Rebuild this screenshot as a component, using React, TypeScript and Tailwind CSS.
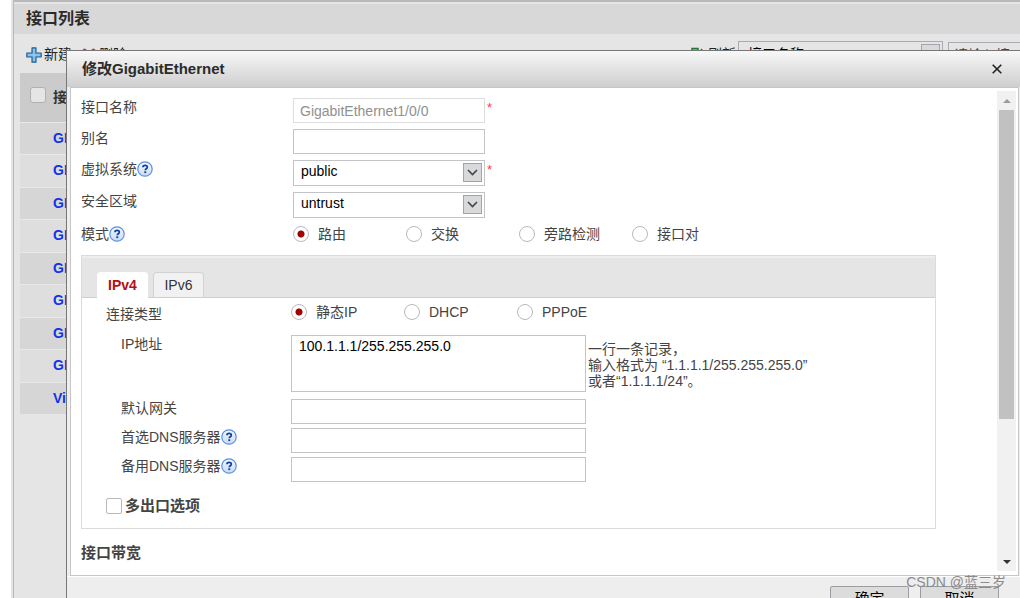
import { useState } from 'react';
import type { ReactNode } from 'react';

const interfaces = [
  'GE1/0/0',
  'GE1/0/1',
  'GE1/0/2',
  'GE1/0/3',
  'GE1/0/4',
  'GE1/0/5',
  'GE1/0/6',
  'GE1/0/7',
  'Virtual-if0',
];

const fieldClass =
  'block h-[25px] border border-[#c3c4c8] bg-white px-[6px] text-[14px] text-[#222] outline-none';

function HelpIcon() {
  return (
    <svg viewBox="0 0 16 16" className="h-4 w-4 shrink-0" aria-label="帮助">
      <defs>
        <linearGradient id="help-fill" x1="0" y1="0" x2="0" y2="1">
          <stop offset="0" stopColor="#f4f8fe" />
          <stop offset="1" stopColor="#c9dbf3" />
        </linearGradient>
      </defs>
      <circle cx="8" cy="8" r="7.2" fill="url(#help-fill)" stroke="#5b8fdc" strokeWidth="1.2" />
      <path
        d="M5.9 6.3c0-1.4 1-2 2.2-2s2.2.7 2.2 1.9c0 1.5-2 1.6-2 3"
        fill="none"
        stroke="#0c43a3"
        strokeWidth="1.7"
      />
      <rect x="7.3" y="10.3" width="1.9" height="1.8" fill="#0c43a3" />
    </svg>
  );
}

function PlusIcon() {
  return (
    <svg viewBox="0 0 16 16" className="h-4 w-4 shrink-0">
      <path
        d="M6 .8h4V6h5.2v4H10v5.2H6V10H.8V6H6z"
        fill="#6fb0dd"
        stroke="#27629c"
        strokeWidth="1.2"
        strokeLinejoin="round"
      />
      <path d="M8 2v12M2 8h12" stroke="#a5d3f0" strokeWidth="1" />
    </svg>
  );
}

function DeleteIcon() {
  return (
    <svg viewBox="0 0 16 16" className="h-4 w-4 shrink-0">
      <path
        d="M3.5 3.5l9 9M12.5 3.5l-9 9"
        stroke="#cf3b3b"
        strokeWidth="4"
        strokeLinecap="round"
      />
    </svg>
  );
}

function RefreshIcon() {
  return (
    <svg viewBox="0 0 16 16" className="h-4 w-4 shrink-0">
      <path d="M2 1.5h6v5H2z" fill="#7fc98a" stroke="#1f7a34" strokeWidth="1.5" />
      <path d="M11 2l3 4-3 3M5 9v5h6" fill="none" stroke="#1f7a34" strokeWidth="1.5" />
    </svg>
  );
}

function Chevron() {
  return (
    <span className="pointer-events-none absolute top-[3px] right-[3px] flex h-[19px] w-[19px] items-center justify-center border border-[#a3a5aa] bg-[#d8d9db]">
      <svg viewBox="0 0 11 7" className="h-[7px] w-[11px]">
        <path d="M1 1l4.5 4.5L10 1" fill="none" stroke="#444" strokeWidth="1.6" />
      </svg>
    </span>
  );
}

function SelectBox({ id, value }: { id: string; value: string }) {
  return (
    <div className="relative w-[192px]">
      <select
        id={id}
        className="block h-[26px] w-full appearance-none border border-[#c3c4c8] bg-white px-[7px] pb-1 text-[14px] text-black outline-none"
      >
        <option>{value}</option>
      </select>
      <Chevron />
    </div>
  );
}

function RadioGroup({
  name,
  options,
  labelledBy,
}: {
  name: string;
  options: string[];
  labelledBy: string;
}) {
  const [value, setValue] = useState(options[0]);
  return (
    <div role="radiogroup" aria-labelledby={labelledBy} className="flex">
      {options.map((option) => (
        <label key={option} className="flex w-[113px] items-center gap-[9px] leading-4">
          <input
            type="radio"
            name={name}
            checked={value === option}
            onChange={() => setValue(option)}
            className="h-4 w-4 shrink-0 appearance-none rounded-full border border-[#b9b9bb] bg-white checked:bg-[radial-gradient(circle,#a00000_0,#a00000_3px,#fff_4px)]"
          />
          {option}
        </label>
      ))}
    </div>
  );
}

function Star() {
  return <span className="ml-[2px] self-start text-[13px] leading-5 text-[#ff3b3b]">*</span>;
}

function FormRow({
  label,
  htmlFor,
  help,
  children,
}: {
  label: string;
  htmlFor: string;
  help?: boolean;
  children: ReactNode;
}) {
  return (
    <div className="flex items-start">
      <div className="flex h-[18px] w-[212px] shrink-0 items-center">
        <label htmlFor={htmlFor}>{label}</label>
        {help && <HelpIcon />}
      </div>
      {children}
    </div>
  );
}

function DnsRow({ id, label, help }: { id: string; label: string; help?: boolean }) {
  return (
    <div className="flex items-start pl-[15px]">
      <div className="flex h-[18px] w-[170px] shrink-0 items-center">
        <label htmlFor={id}>{label}</label>
        {help && <HelpIcon />}
      </div>
      <input id={id} className={`${fieldClass} w-[295px]`} />
    </div>
  );
}

function ListPage() {
  return (
    <main className="ml-[11px] h-full border-l-2 border-[#e4e4e4]">
      <div className="h-full border-t-2 border-l border-[#b9b9bb] bg-[#e5e5e5]">
        <h1 className="mt-[2px] flex h-[30px] items-center bg-[#d8d8d8] pl-[12px] text-[16px] font-bold text-[#2b2b2b]">
          接口列表
        </h1>
        <div className="flex h-[39px] items-center pt-[2px] pl-[12px] text-[14px] text-[#222]">
          <button type="button" className="flex items-center gap-[2px]">
            <PlusIcon />
            新建
          </button>
          <button type="button" className="ml-[9px] flex items-center gap-[2px]">
            <DeleteIcon />
            删除
          </button>
          <button type="button" className="ml-auto flex shrink-0 items-center gap-[2px]">
            <RefreshIcon />
            刷新
          </button>
          <div className="relative ml-[2px] w-[205px] shrink-0">
            <select
              aria-label="查询条件"
              className="block h-[28px] w-full appearance-none border border-[#a9aab2] bg-[#e5e5e5] px-[9px] text-black"
            >
              <option>接口名称</option>
            </select>
            <Chevron />
          </div>
          <input
            aria-label="查询内容"
            placeholder="请输入接口名称"
            className="ml-[5px] h-[26px] w-[72px] shrink-0 border border-r-0 border-[#a9aab2] bg-[#e5e5e5] px-[5px] text-black placeholder:text-[#444]"
          />
        </div>
        <table className="ml-[6px] h-[341px] w-full table-fixed border-collapse text-left text-[14px] font-bold">
          <thead>
            <tr className="h-[49px] bg-[#cbcbcb] text-[#333]">
              <th className="w-[33px] pb-[4px] pl-[10px]">
                <input
                  type="checkbox"
                  aria-label="全选"
                  className="block h-4 w-4 appearance-none rounded-[3px] border border-[#b0b0b2] bg-[#e5e5e5]"
                />
              </th>
              <th>接口名称</th>
            </tr>
          </thead>
          <tbody>
            {interfaces.map((name) => (
              <tr
                key={name}
                className="border-t border-[#e9e9e9] odd:bg-[#d6d6d6] even:bg-[#dedede]"
              >
                <td />
                <td>
                  <a href="#edit" className="text-[#1232e6]">
                    {name}
                  </a>
                </td>
              </tr>
            ))}
          </tbody>
        </table>
      </div>
    </main>
  );
}

function ScrollRail() {
  return (
    <div className="mt-[3px] mr-[2px] mb-[4px] flex w-[19px] shrink-0 flex-col bg-[#f1f1f1] px-[2px]">
      <div className="flex h-[19px] items-center justify-center">
        <svg viewBox="0 0 8 4" className="h-1 w-2">
          <path d="M0 4l4-4 4 4z" fill="#9b9b9b" />
        </svg>
      </div>
      <div className="flex-1">
        <div className="h-[70%] bg-[#c1c1c1]" />
      </div>
      <div className="flex h-[19px] items-center justify-center">
        <svg viewBox="0 0 8 4" className="h-1 w-2">
          <path d="M0 0l4 4 4-4z" fill="#333" />
        </svg>
      </div>
    </div>
  );
}

function AddressPanel() {
  return (
    <section className="mt-[11px] mr-[61px] border border-[#dcdcdc]">
      <div
        role="tablist"
        className="flex h-[42px] items-end gap-[5px] border-t-2 border-b border-t-[#eeeeee] border-b-[#cfcfcf] bg-[#e5e5e5] pl-[15px] text-[14px]"
      >
        <button
          type="button"
          role="tab"
          aria-selected="true"
          className="-mb-px h-[26px] w-[51px] rounded-t-[4px] bg-white font-bold text-[#b40f14]"
        >
          IPv4
        </button>
        <button
          type="button"
          role="tab"
          aria-selected="false"
          className="h-[25px] w-[51px] rounded-t-[4px] border border-b-0 border-[#d2d2d2] bg-[#f1f1f1] text-[#333]"
        >
          IPv6
        </button>
      </div>
      <div className="pt-[6px] pb-[14px] pl-[24px]">
        <div className="flex items-start">
          <span id="link-type" className="w-[185px] shrink-0 leading-5">
            连接类型
          </span>
          <RadioGroup name="link-type" labelledBy="link-type" options={['静态IP', 'DHCP', 'PPPoE']} />
        </div>
        <div className="mt-[11px] flex items-start pl-[15px]">
          <label htmlFor="ip" className="w-[170px] shrink-0 leading-[18px]">
            IP地址
          </label>
          <textarea
            id="ip"
            defaultValue="100.1.1.1/255.255.255.0"
            className="block h-[57px] w-[295px] resize-none border border-[#c3c4c8] px-[7px] py-[2px] text-[14px] leading-4 text-black outline-none"
          />
          <p className="mt-[6px] ml-[2px] leading-4">
            一行一条记录，
            <br />
            输入格式为 “1.1.1.1/255.255.255.0”
            <br />
            或者“1.1.1.1/24”。
          </p>
        </div>
        <div className="mt-[7px] flex flex-col gap-1">
          <DnsRow id="gateway" label="默认网关" />
          <DnsRow id="dns1" label="首选DNS服务器" help />
          <DnsRow id="dns2" label="备用DNS服务器" help />
        </div>
        <label className="mt-[16px] flex w-fit items-center gap-[3px] text-[15px] leading-4 font-bold">
          <input
            type="checkbox"
            className="h-4 w-4 appearance-none rounded-[2px] border border-[#b9b9bb] bg-white"
          />
          多出口选项
        </label>
      </div>
    </section>
  );
}

function EditDialog() {
  return (
    <div
      role="dialog"
      aria-labelledby="dialog-title"
      className="absolute top-[50px] right-0 left-[66px] border-t border-l border-[#777] bg-[#eeeeee] text-[14px] text-[#444]"
    >
      <header className="flex h-[36px] items-center justify-between bg-linear-to-b from-[#f8f8f8] to-[#cecece] pr-[17px] pl-[15px]">
        <h2 id="dialog-title" className="text-[15px] font-bold text-[#2b2b2b]">
          修改GigabitEthernet
        </h2>
        <button type="button" aria-label="关闭" className="flex h-3 w-3 items-center justify-center">
          <svg viewBox="0 0 10 10" className="h-[10px] w-[10px]">
            <path d="M.7.7l8.6 8.6M9.3.7L.7 9.3" stroke="#222" strokeWidth="1.6" />
          </svg>
        </button>
      </header>
      <div className="mr-px ml-[3px] flex border border-[#c6c6c6] bg-white">
        <form className="min-w-0 flex-1 pt-[10px] pb-[12px] pl-[10px]">
          <div className="flex flex-col gap-[6px]">
            <FormRow label="接口名称" htmlFor="name">
              <input
                id="name"
                disabled
                defaultValue="GigabitEthernet1/0/0"
                className="block h-[25px] w-[192px] border border-[#dedede] bg-white px-[6px] text-[14px] text-[#909090]"
              />
              <Star />
            </FormRow>
            <FormRow label="别名" htmlFor="alias">
              <input id="alias" className={`${fieldClass} w-[192px]`} />
            </FormRow>
            <FormRow label="虚拟系统" htmlFor="vsys" help>
              <SelectBox id="vsys" value="public" />
              <Star />
            </FormRow>
            <FormRow label="安全区域" htmlFor="zone">
              <SelectBox id="zone" value="untrust" />
            </FormRow>
            <div className="flex items-center">
              <div className="flex h-5 w-[212px] shrink-0 items-center">
                <span id="mode">模式</span>
                <HelpIcon />
              </div>
              <RadioGroup
                name="mode"
                labelledBy="mode"
                options={['路由', '交换', '旁路检测', '接口对']}
              />
            </div>
          </div>
          <AddressPanel />
          <h3 className="mt-[14px] text-[15px] leading-5 font-bold">接口带宽</h3>
        </form>
        <ScrollRail />
      </div>
      <footer className="flex justify-end gap-[11px] border-t border-white pt-[9px] pr-[21px] pb-4">
        <button
          type="button"
          className="h-[27px] w-[79px] rounded-[2px] border border-[#9c9ca2] bg-[#dcdcdc] text-[15px] text-black"
        >
          确定
        </button>
        <button
          type="button"
          className="h-[27px] w-[79px] rounded-[2px] border border-[#9c9ca2] bg-[#dcdcdc] text-[15px] text-black"
        >
          取消
        </button>
      </footer>
    </div>
  );
}

export default function App() {
  return (
    <div className="relative h-screen overflow-hidden bg-white font-['Liberation_Sans','Noto_Sans_CJK_SC',sans-serif]">
      <ListPage />
      <EditDialog />
      <span className="absolute right-[14px] bottom-[6px] text-[14px] leading-5 text-[#8b8b8b]">
        CSDN @蓝三岁
      </span>
    </div>
  );
}
